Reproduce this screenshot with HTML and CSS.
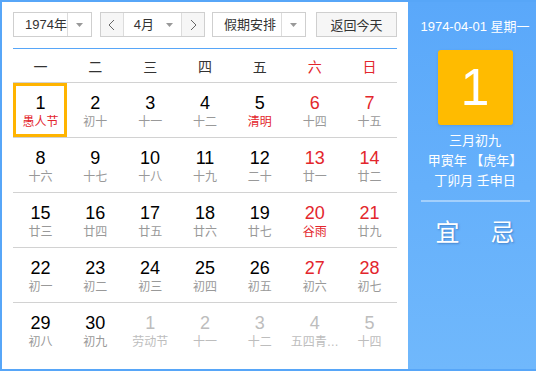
FILE: index.html
```html
<!DOCTYPE html>
<html lang="zh">
<head>
<meta charset="utf-8">
<title>万年历</title>
<link rel="stylesheet" href="styles.css">
</head>
<body>
<div class="cal">
  <div class="main">
    <div class="toolbar">
      <div class="select year">
        <span class="val">1974年</span>
        <span class="drop"><svg width="7" height="4" viewBox="0 0 7 4"><polygon points="0,0 7,0 3.5,4" fill="#999"/></svg></span>
      </div>
      <div class="month-group">
        <span class="step"><svg width="7" height="12" viewBox="0 0 7 12"><polyline points="6,1 1,6 6,11" fill="none" stroke="#666" stroke-width="1"/></svg></span>
        <div class="month">
          <span class="val">4月</span>
          <svg width="7" height="4" viewBox="0 0 7 4"><polygon points="0,0 7,0 3.5,4" fill="#999"/></svg>
        </div>
        <span class="step"><svg width="7" height="12" viewBox="0 0 7 12"><polyline points="1,1 6,6 1,11" fill="none" stroke="#666" stroke-width="1"/></svg></span>
      </div>
      <div class="select holiday">
        <span class="val">假期安排</span>
        <span class="drop"><svg width="7" height="4" viewBox="0 0 7 4"><polygon points="0,0 7,0 3.5,4" fill="#999"/></svg></span>
      </div>
      <button class="today">返回今天</button>
    </div>
    <div class="rule"></div>
    <div class="weekdays">
      <span>一</span><span>二</span><span>三</span><span>四</span><span>五</span><span class="we">六</span><span class="we">日</span>
    </div>
    <div class="days">
      <div class="cell sel"><b>1</b><i class="fest">愚人节</i></div>
      <div class="cell"><b>2</b><i>初十</i></div>
      <div class="cell"><b>3</b><i>十一</i></div>
      <div class="cell"><b>4</b><i>十二</i></div>
      <div class="cell"><b>5</b><i class="fest">清明</i></div>
      <div class="cell we"><b>6</b><i>十四</i></div>
      <div class="cell we"><b>7</b><i>十五</i></div>

      <div class="cell"><b>8</b><i>十六</i></div>
      <div class="cell"><b>9</b><i>十七</i></div>
      <div class="cell"><b>10</b><i>十八</i></div>
      <div class="cell"><b>11</b><i>十九</i></div>
      <div class="cell"><b>12</b><i>二十</i></div>
      <div class="cell we"><b>13</b><i>廿一</i></div>
      <div class="cell we"><b>14</b><i>廿二</i></div>

      <div class="cell"><b>15</b><i>廿三</i></div>
      <div class="cell"><b>16</b><i>廿四</i></div>
      <div class="cell"><b>17</b><i>廿五</i></div>
      <div class="cell"><b>18</b><i>廿六</i></div>
      <div class="cell"><b>19</b><i>廿七</i></div>
      <div class="cell we"><b>20</b><i class="fest">谷雨</i></div>
      <div class="cell we"><b>21</b><i>廿九</i></div>

      <div class="cell"><b>22</b><i>初一</i></div>
      <div class="cell"><b>23</b><i>初二</i></div>
      <div class="cell"><b>24</b><i>初三</i></div>
      <div class="cell"><b>25</b><i>初四</i></div>
      <div class="cell"><b>26</b><i>初五</i></div>
      <div class="cell we"><b>27</b><i>初六</i></div>
      <div class="cell we"><b>28</b><i>初七</i></div>

      <div class="cell"><b>29</b><i>初八</i></div>
      <div class="cell"><b>30</b><i>初九</i></div>
      <div class="cell other"><b>1</b><i>劳动节</i></div>
      <div class="cell other"><b>2</b><i>十一</i></div>
      <div class="cell other"><b>3</b><i>十二</i></div>
      <div class="cell other"><b>4</b><i>五四青…</i></div>
      <div class="cell other"><b>5</b><i>十四</i></div>
    </div>
  </div>
  <div class="side">
    <div class="date">1974-04-01 星期一</div>
    <div class="big">1</div>
    <div class="lunar">
      <p>三月初九</p>
      <p>甲寅年 【虎年】</p>
      <p>丁卯月 壬申日</p>
    </div>
    <div class="divider"></div>
    <div class="yiji"><span>宜</span><span>忌</span></div>
  </div>
</div>
</body>
</html>
```

FILE: styles.css
```css
* { box-sizing: border-box; }
html, body { margin: 0; padding: 0; }
body {
  font-family: "Liberation Sans", "Noto Sans CJK SC", sans-serif;
  background: #fff;
}
.cal {
  width: 536px;
  height: 371px;
  display: flex;
  border: 2px solid #57a6f8;
  border-right: 0;
  background: #57a6f8;
}
.main {
  width: 406px;
  background: #fff;
  padding: 10px 11px 0 11px;
}
.toolbar {
  display: flex;
  height: 25px;
  font-size: 13px;
  color: #333;
}
.select {
  display: flex;
  border: 1px solid #cfcfcf;
  background: #fff;
  height: 25px;
}
.select .val {
  flex: 1;
  padding-left: 11px;
  line-height: 23px;
}
.select .drop {
  width: 24px;
  border-left: 1px solid #dcdcdc;
  display: flex;
  align-items: center;
  justify-content: center;
}
.year { width: 79px; }
.month-group {
  display: flex;
  margin-left: 8px;
  width: 105px;
  border: 1px solid #cfcfcf;
  height: 25px;
}
.step {
  width: 22px;
  background: #f6f6f6;
  display: flex;
  align-items: center;
  justify-content: center;
}
.month {
  width: 60px;
  display: flex;
  align-items: center;
  border-left: 1px solid #dcdcdc;
  border-right: 1px solid #dcdcdc;
  padding-left: 10px;
  padding-right: 8px;
}
.month .val { flex: 1; line-height: 23px; }
.holiday { width: 94px; margin-left: 7px; }
.today {
  margin-left: 10px;
  width: 81px;
  height: 25px;
  border: 1px solid #cfcfcf;
  background: #f6f6f6;
  font: inherit;
  color: #333;
  padding: 0;
}
.rule {
  height: 1px;
  background: #57a6f8;
  margin-top: 11px;
}
.weekdays {
  display: grid;
  grid-template-columns: repeat(7, 1fr);
  height: 33px;
  align-items: center;
  text-align: center;
  font-size: 14px;
  color: #333;
}
.weekdays .we { color: #e3262c; }
.days {
  display: grid;
  grid-template-columns: repeat(7, 1fr);
}
.cell {
  height: 55px;
  border-top: 1px solid #d2d2d2;
  display: flex;
  flex-direction: column;
  align-items: center;
  padding-top: 10px;
  position: relative;
}
.cell b {
  font-weight: normal;
  font-size: 18px;
  line-height: 20px;
  color: #000;
}
.cell i {
  font-style: normal;
  font-size: 12px;
  line-height: 18px;
  color: #999;
  white-space: nowrap;
}
.cell.we b { color: #e3262c; }
.cell i.fest { color: #e3262c; }
.cell.other b, .cell.other i { color: #bdbdbd; }
.cell.sel::after {
  content: "";
  position: absolute;
  left: 0;
  right: 1px;
  top: 0;
  bottom: 0;
  border: 3px solid #ffb400;
}
.side {
  flex: 1;
  background: linear-gradient(#5aa8fa, #70b8fc);
  padding-left: 6px;
  display: flex;
  flex-direction: column;
  align-items: center;
  color: #fff;
}
.date {
  font-size: 13px;
  margin-top: 17px;
  line-height: 16px;
}
.big {
  margin-top: 15px;
  width: 75px;
  height: 75px;
  background: #ffbb00;
  border-radius: 3px;
  font-size: 52px;
  line-height: 75px;
  text-align: center;
  box-shadow: 0 1px 3px rgba(0, 60, 140, 0.15);
}
.lunar {
  margin-top: 6px;
  text-align: center;
  font-size: 13px;
}
.lunar p {
  margin: 0;
  line-height: 20px;
}
.divider {
  width: 109px;
  height: 2px;
  background: rgba(255, 255, 255, 0.4);
  margin-top: 9px;
}
.yiji {
  margin-top: 16px;
  display: flex;
  gap: 31px;
  font-size: 24px;
  line-height: 30px;
  text-shadow: 1px 1px 2px rgba(0, 40, 110, 0.35);
}
```
